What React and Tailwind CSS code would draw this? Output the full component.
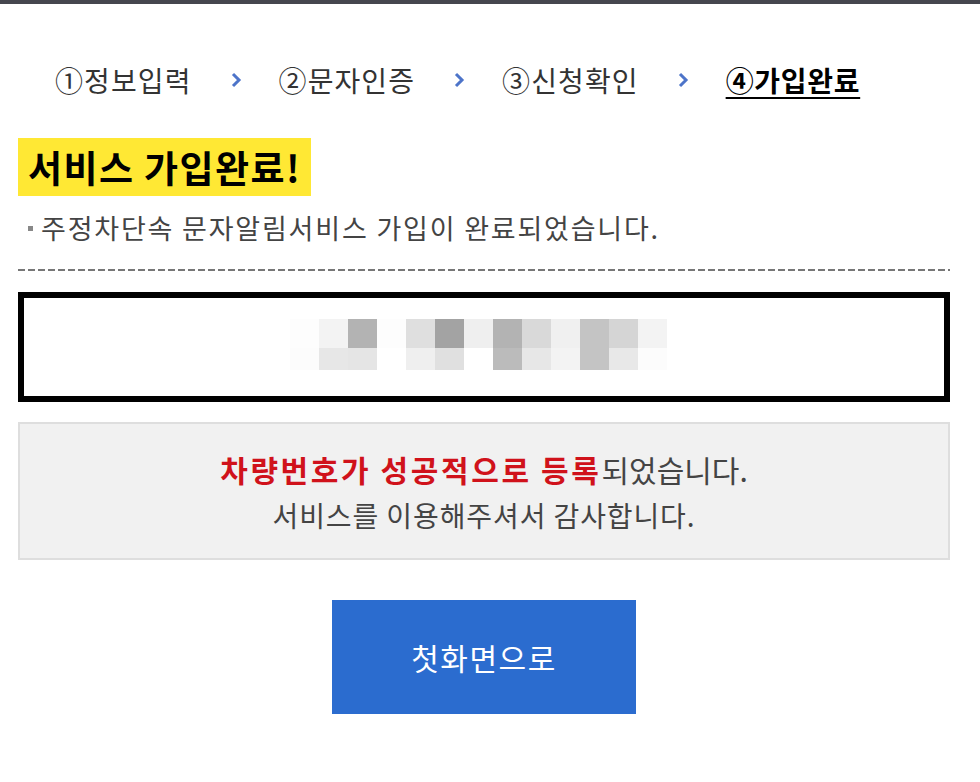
const steps = [
  { label: "①정보입력", active: false },
  { label: "②문자인증", active: false },
  { label: "③신청확인", active: false },
  { label: "④가입완료", active: true }
];

const blurTop = [
  "bg-[#fdfdfd]", "bg-[#f3f3f3]", "bg-[#b3b3b3]", "bg-[#fdfdfd]", "bg-[#dfdfdf]", "bg-[#a3a3a3]", "bg-[#efefef]",
  "bg-[#b3b3b3]", "bg-[#d9d9d9]", "bg-[#f0f0f0]", "bg-[#c4c4c4]", "bg-[#d5d5d5]", "bg-[#f3f3f3]"
];
const blurBottom = [
  "bg-[#fcfcfc]", "bg-[#e7e7e7]", "bg-[#e5e5e5]", "bg-[#ffffff]", "bg-[#efefef]", "bg-[#e0e0e0]", "bg-[#ffffff]",
  "bg-[#bbbbbb]", "bg-[#e7e7e7]", "bg-[#f3f3f3]", "bg-[#c4c4c4]", "bg-[#e8e8e8]", "bg-[#fcfcfc]"
];

function Chevron() {
  return (
    <svg width="14" height="18" viewBox="0 0 14 18" className="ml-[37px] mr-[36px]">
      <path d="M4 3 L10 9 L4 15" fill="none" stroke="#4d74c9" strokeWidth="3" />
    </svg>
  );
}

export default function App() {
  return (
    <div className="min-h-[782px] w-[980px] bg-white font-['Noto_Sans_CJK_KR','Noto_Sans',sans-serif]">
      <div className="h-[4px] bg-[#45464e]" />

      <div className="ml-[18px] w-[932px]">
        {/* steps */}
        <nav className="flex items-center pl-[37px] pt-[58px]">
          {steps.map((s, i) => (
            <div key={s.label} className="flex items-center">
              <span
                className={
                  s.active
                    ? "text-[28px] leading-[36px] font-bold tracking-[0.7px] text-black underline underline-offset-[5px] decoration-[2px]"
                    : "text-[28px] leading-[36px] tracking-[1.1px] text-[#333]"
                }
              >
                {s.label}
              </span>
              {i < steps.length - 1 && <Chevron />}
            </div>
          ))}
        </nav>

        {/* title */}
        <div className="mt-[40px]">
          <h1 className="inline-block bg-[#ffe834] pl-[10px] pr-[10px] text-[37px] font-bold leading-[58px] tracking-[1.4px] text-black">
            서비스 가입완료!
          </h1>
        </div>
        <p className="mt-[14px] flex items-center text-[27px] leading-[36px] tracking-[1.8px] text-[#444]">
          <span className="ml-[10px] mr-[8px] inline-block h-[5px] w-[5px] bg-[#888]" />
          주정차단속 문자알림서비스 가입이 완료되었습니다.
        </p>

        <div className="mt-[23px] h-[2px] bg-[repeating-linear-gradient(to_right,#777_0_7px,transparent_7px_10px)]" />

        {/* masked number */}
        <div className="mt-[21px] flex h-[110px] items-center justify-center border-[6px] border-black pr-[11px]">
          <div className="-mt-[6px] flex flex-col">
            <div className="flex">
              {blurTop.map((c, i) => (
                <div key={i} className={`h-[29px] w-[29px] ${c}`} />
              ))}
            </div>
            <div className="flex">
              {blurBottom.map((c, i) => (
                <div key={i} className={`h-[22px] w-[29px] ${c}`} />
              ))}
            </div>
          </div>
        </div>

        {/* message */}
        <div className="mt-[20px] flex h-[138px] flex-col items-center justify-center border-2 border-[#dedede] bg-[#f1f1f1]">
          <p className="text-[30px] leading-[44px] text-[#444]">
            <span className="font-bold tracking-[2.6px] text-[#d0121b]">차량번호가 성공적으로 등록</span>되었습니다.
          </p>
          <p className="mt-[4px] text-[28px] leading-[40px] tracking-[0.9px] text-[#444]">
            서비스를 이용해주셔서 감사합니다.
          </p>
        </div>

        <div className="mt-[40px] flex justify-center">
          <button className="h-[114px] w-[304px] bg-[#2b6ccf] text-[30px] tracking-[1.5px] text-white">첫화면으로</button>
        </div>
      </div>
    </div>
  );
}
